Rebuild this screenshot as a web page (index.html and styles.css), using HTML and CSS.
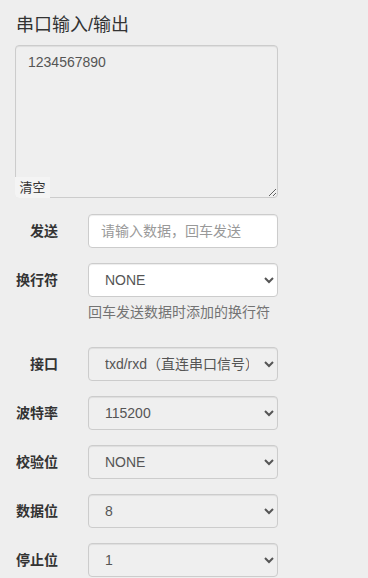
FILE: index.html
```html
<!DOCTYPE html>
<html lang="zh-CN">
<head>
  <meta charset="UTF-8" />
  <title>串口</title>
  <link rel="stylesheet" href="styles.css">
</head>
<body>

  <main class="panel">
    <h4 class="panel-title">串口输入/输出</h4>

    <div class="console">
      <textarea class="form-control console-text" readonly>1234567890</textarea>
      <button class="btn-clear">清空</button>
    </div>

    <div class="form-row">
      <label>发送</label>
      <input class="form-control" type="text" placeholder="请输入数据，回车发送">
    </div>

    <div class="form-row">
      <label>换行符</label>
      <select class="form-control">
        <option>NONE</option>
        <option>\r\n</option>
        <option>\n</option>
      </select>
    </div>
    <p class="help-block">回车发送数据时添加的换行符</p>

    <div class="form-row">
      <label>接口</label>
      <select class="form-control" disabled>
        <option>txd/rxd（直连串口信号）</option>
      </select>
    </div>

    <div class="form-row">
      <label>波特率</label>
      <select class="form-control" disabled>
        <option>115200</option>
      </select>
    </div>

    <div class="form-row">
      <label>校验位</label>
      <select class="form-control" disabled>
        <option>NONE</option>
      </select>
    </div>

    <div class="form-row">
      <label>数据位</label>
      <select class="form-control" disabled>
        <option>8</option>
      </select>
    </div>

    <div class="form-row">
      <label>停止位</label>
      <select class="form-control" disabled>
        <option>1</option>
      </select>
    </div>
  </main>

</body>
</html>
```

FILE: styles.css
```css
* {
  box-sizing: border-box;
}

body {
  margin: 0;
  background: #eeeeee;
  color: #333;
  font-family: "Liberation Sans", Arial, "Noto Sans CJK SC", sans-serif;
  font-size: 14px;
  line-height: 20px;
}

.panel {
  padding: 15px 90px 0 15px;
}

.panel-title {
  margin: 0 0 10px 1px;
  font-size: 18px;
  font-weight: normal;
  line-height: 20px;
  color: #333;
}

.form-control {
  display: block;
  width: 190px;
  height: 34px;
  padding: 6px 12px;
  font-family: inherit;
  font-size: 14px;
  line-height: 20px;
  color: #555;
  background: #fff;
  border: 1px solid #ccc;
  border-radius: 4px;
  box-shadow: inset 0 1px 1px rgba(0, 0, 0, 0.075);
}

.form-control::placeholder {
  color: #999;
}

.form-control[disabled],
.form-control[readonly] {
  background: #efefef;
  opacity: 1;
}

.console {
  position: relative;
  margin-bottom: 16px;
}

.console-text {
  width: 263px;
  height: 153px;
  resize: vertical;
}

.btn-clear {
  position: absolute;
  left: 0;
  bottom: 0;
  width: 35px;
  height: 21px;
  padding: 0;
  font-family: inherit;
  font-size: 13px;
  line-height: 21px;
  color: #333;
  background: #f4f4f4;
  border: none;
  border-radius: 0 0 0 4px;
}

.form-row {
  display: flex;
  align-items: center;
  margin-bottom: 15px;
}

.form-row label {
  width: 43px;
  margin-right: 30px;
  text-align: right;
  white-space: nowrap;
  font-weight: bold;
  color: #333;
}

.help-block {
  margin: -10px 0 25px 73px;
  color: #737373;
}
```
